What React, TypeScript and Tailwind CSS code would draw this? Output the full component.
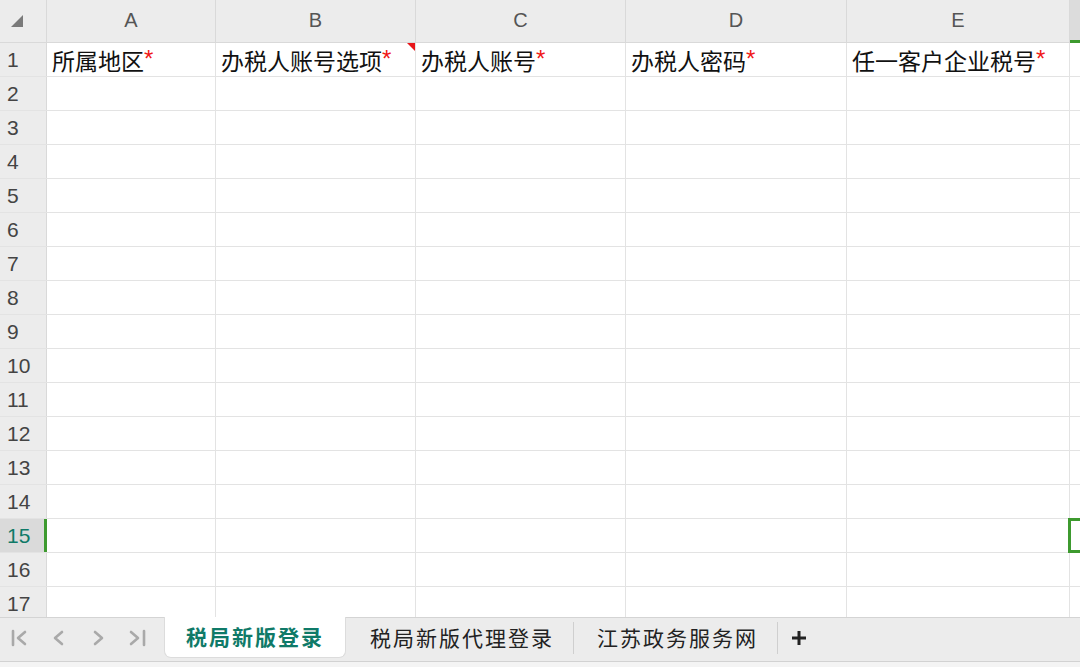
import React from 'react'

const cols = [
  { key: 'A', w: 'w-[169px]', title: '所属地区' },
  { key: 'B', w: 'w-[200px]', title: '办税人账号选项', comment: true },
  { key: 'C', w: 'w-[210px]', title: '办税人账号' },
  { key: 'D', w: 'w-[221px]', title: '办税人密码' },
  { key: 'E', w: 'w-[223px]', title: '任一客户企业税号' },
]

const rows = Array.from({ length: 17 }, (_, i) => i + 1)

const cjk = { fontFamily: '"Noto Sans CJK SC", "Noto Sans", sans-serif' }
const latin = { fontFamily: '"Liberation Sans", Arial, sans-serif' }

function NavArrows() {
  return (
    <div className="flex items-center gap-[19px] pl-[10px] pr-[17px] text-[#a9a9a9]">
      <svg width="20" height="20" viewBox="0 0 20 20" fill="none" stroke="currentColor" strokeWidth="2.6" strokeLinecap="round" strokeLinejoin="round">
        <path d="M3 3v14" />
        <path d="M15 4l-7 6 7 6" />
      </svg>
      <svg width="20" height="20" viewBox="0 0 20 20" fill="none" stroke="currentColor" strokeWidth="2.6" strokeLinecap="round" strokeLinejoin="round">
        <path d="M13 4l-7 6 7 6" />
      </svg>
      <svg width="20" height="20" viewBox="0 0 20 20" fill="none" stroke="currentColor" strokeWidth="2.6" strokeLinecap="round" strokeLinejoin="round">
        <path d="M7 4l7 6-7 6" />
      </svg>
      <svg width="20" height="20" viewBox="0 0 20 20" fill="none" stroke="currentColor" strokeWidth="2.6" strokeLinecap="round" strokeLinejoin="round">
        <path d="M4 4l7 6-7 6" />
        <path d="M17 3v14" />
      </svg>
    </div>
  )
}

export default function App() {
  return (
    <div className="w-[1080px] h-[667px] overflow-hidden bg-white flex flex-col select-none">
      {/* column header */}
      <div className="flex h-[43px] shrink-0 bg-[#ececec] border-b border-[#d9d9d9]">
        <div className="w-[47px] shrink-0 border-r border-[#d9d9d9] flex items-end pl-[11px] pb-[15px]">
          <svg width="12" height="12" viewBox="0 0 12 12">
            <path d="M12 0V12H0Z" fill="#7a7a7a" />
          </svg>
        </div>
        {cols.map((c) => (
          <div
            key={c.key}
            className={`${c.w} shrink-0 border-r border-[#d9d9d9] flex items-center justify-center text-[20px] text-[#555] pb-[2px]`}
            style={latin}
          >
            {c.key}
          </div>
        ))}
        <div className="flex-1 bg-[#dcdcdc] border-b-[3px] border-[#3d9a2f] -mb-px" />
      </div>

      {/* rows */}
      <div className="flex-1 overflow-hidden">
        {rows.map((r) => {
          const sel = r === 15
          return (
            <div key={r} className="flex h-[34px] border-b border-[#e3e3e3]">
              <div
                className={`w-[47px] shrink-0 flex items-center pl-[7px] text-[21px] ${
                  sel
                    ? 'bg-[#dadada] text-[#0f7a68] border-r-[3px] border-[#3d9a2f]'
                    : 'bg-[#ececec] text-[#444] border-r border-[#d9d9d9]'
                }`}
                style={latin}
              >
                {r}
              </div>
              {cols.map((c) => (
                <div
                  key={c.key}
                  className={`${c.w} shrink-0 border-r border-[#e3e3e3] relative flex items-center pl-[5px] text-[23px] leading-[32px] text-[#111] whitespace-nowrap`}
                  style={cjk}
                >
                  {r === 1 && (
                    <>
                      <span>{c.title}</span>
                      <span className="text-[#f01818] text-[24px] leading-[24px] self-start mt-[4px]" style={latin}>*</span>
                    </>
                  )}
                  {r === 1 && c.comment && (
                    <span className="absolute top-0 right-0 w-0 h-0 border-t-[8px] border-l-[8px] border-t-[#e8161a] border-l-transparent" />
                  )}
                </div>
              ))}
              <div className="flex-1 relative">
                {sel && (
                  <div className="absolute -top-px -bottom-px left-[-2px] right-[-10px] border-[3px] border-[#3d9a2f]" />
                )}
              </div>
            </div>
          )
        })}
      </div>

      {/* sheet tabs */}
      <div className="h-[44px] shrink-0 bg-[#ececec] border-t border-[#d4d4d4] flex items-start" style={cjk}>
        <div className="h-[40px] flex items-center">
          <NavArrows />
        </div>
        <div className="h-[41px] -mt-px w-[182px] bg-white rounded-b-[7px] border-x border-b border-[#dcdcdc] flex items-center justify-center text-[21px] tracking-[2px] font-bold text-[#0f7a68]">
          税局新版登录
        </div>
        <div className="h-[40px] flex items-center">
          <div className="pl-[24px] pr-[19px] text-[21px] tracking-[2px] text-[#222]">税局新版代理登录</div>
          <div className="w-px h-[32px] bg-[#cfcfcf]" />
          <div className="pl-[23px] pr-[19px] text-[21px] tracking-[2px] text-[#222]">江苏政务服务网</div>
          <div className="w-px h-[32px] bg-[#cfcfcf]" />
          <div className="pl-[12px]">
            <svg width="18" height="18" viewBox="0 0 18 18">
              <path d="M9 2v14M2 9h14" stroke="#222" strokeWidth="3" />
            </svg>
          </div>
        </div>
      </div>
      <div className="h-[6px] shrink-0 bg-[#f4f4f4] border-t border-[#d2d2d2]" />
    </div>
  )
}
